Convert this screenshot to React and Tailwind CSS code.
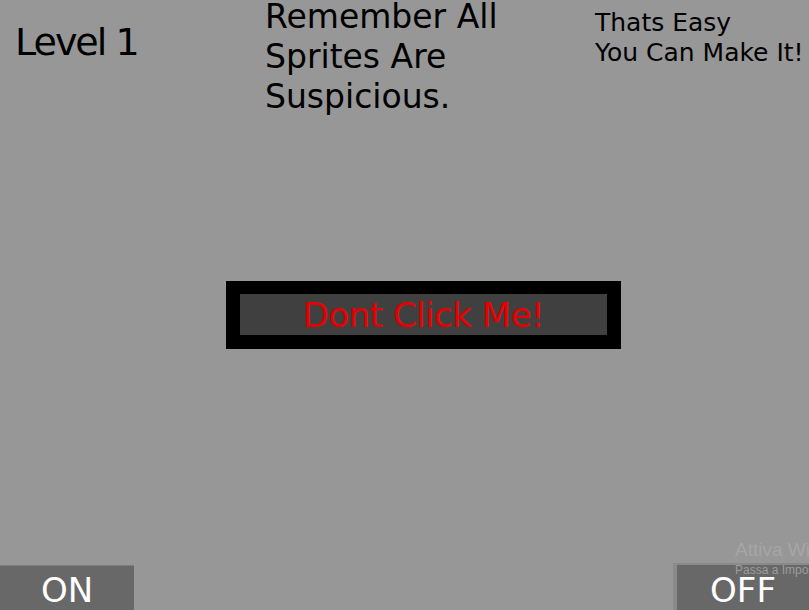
import React from 'react';

const pixelFont = { fontFamily: '"DejaVu Sans", "Liberation Sans", sans-serif' };

const App = () => {
  return (
    <div
      className="relative w-[809px] h-[610px] overflow-hidden bg-[#979797] flex flex-col text-black"
      style={pixelFont}
    >
      {/* Header: level, hint and taunt */}
      <div className="flex">
        <div className="w-[265px] pl-[15px] pt-[23px] text-[38px] leading-[38px] tracking-[-2px]">
          Level 1
        </div>
        <div className="w-[330px] mt-[-3px] text-[33px] leading-[40px]">
          <div>Remember All</div>
          <div>Sprites Are</div>
          <div>Suspicious.</div>
        </div>
        <div className="mt-[8px] text-[25px] leading-[30px] whitespace-nowrap">
          <div>Thats Easy</div>
          <div>You Can Make It!</div>
        </div>
      </div>

      {/* Trap button */}
      <div className="mt-[164px] ml-[226px] w-[395px] h-[68px] bg-black pl-[14px] pr-[14px] pt-[13px] pb-[14px]">
        <button className="w-full h-full bg-[#404040] flex items-center justify-center text-[#e60000] text-[34px] leading-none tracking-[-0.5px]">
          Dont Click Me!
        </button>
      </div>

      {/* Bottom toggles */}
      <div className="mt-auto flex justify-between items-end">
        <button className="w-[134px] h-[45px] bg-[#686868] border-t border-[#7e7e7e] flex items-center justify-center text-white text-[34px] leading-none pt-[4px]">
          ON
        </button>
        <button className="w-[136px] h-[47px] bg-[#686868] border-l-4 border-t-2 border-[#8a8a8a] flex items-center justify-center text-white text-[34px] leading-none pt-[4px]">
          OFF
        </button>
      </div>

      {/* Activation watermark */}
      <div
        className="absolute left-[735px] top-[538px] whitespace-nowrap text-[#a6a6a6] pointer-events-none"
        style={{ fontFamily: '"Liberation Sans", sans-serif' }}
      >
        <div className="text-[19px] leading-[24px]">Attiva Windows</div>
        <div className="text-[12px] leading-[16px] text-[#9c9c9c]">Passa a Impostazioni per attivare Windows.</div>
      </div>
    </div>
  );
};

export default App;
